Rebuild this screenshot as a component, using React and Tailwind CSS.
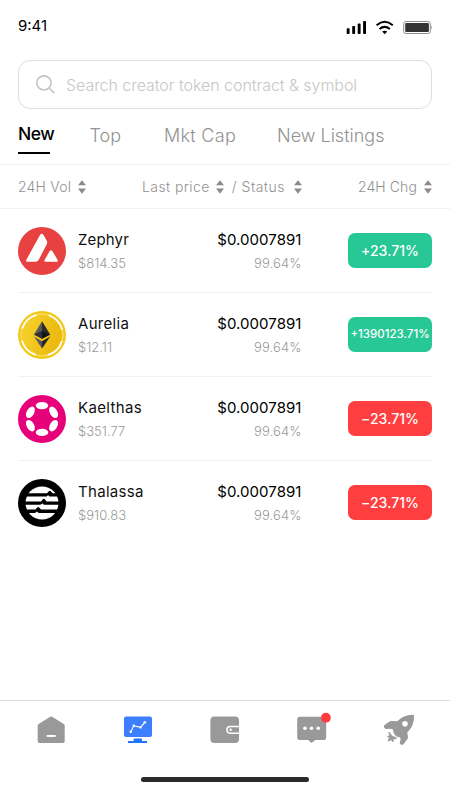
function Zephyr() {
  return (
    <svg className="size-12 shrink-0" viewBox="0 0 48 48">
      <circle cx="24" cy="24" r="24" fill="#e84142" />
      <path fill="#fff" d="M22 8Q23.8 5.4 25.5 8l3.3 5.8q.9 1.7 0 3.4L20.6 33q-.9 1.7-2.9 1.7H9.6q-2.3 0-1.2-2ZM31.6 24.2q1.4-2 2.8 0l5.1 8.5q1.1 2-1 2H27.8q-2.2 0-1.1-2Z" />
    </svg>
  );
}

function Aurelia() {
  return (
    <svg className="size-12 shrink-0" viewBox="0 0 48 48">
      <defs>
        <linearGradient id="gold" x1="0" y1="0" x2="1" y2="0.3">
          <stop offset="0" stopColor="#f7d32f" />
          <stop offset="1" stopColor="#ecb90f" />
        </linearGradient>
      </defs>
      <circle cx="24" cy="24" r="24" fill="#f2c91c" />
      <circle cx="24" cy="24" r="21" fill="none" stroke="#fbeaa8" strokeWidth="0.7" />
      <circle cx="24" cy="24" r="19.6" fill="url(#gold)" />
      <circle cx="24" cy="24" r="20.8" fill="none" stroke="#fff" strokeWidth="1.8" strokeLinecap="round" strokeDasharray="19 13.67" strokeDashoffset="-6.8" />
      <path fill="#5a5a5c" d="M24 10.3 16 23.6l8 4.2Z" />
      <path fill="#2b2b2d" d="m24 10.3 8.2 13.3-8.2 4.2Z" />
      <path fill="#303032" d="m16 23.6 8-3.6v7.8Z" />
      <path fill="#151516" d="m32.2 23.6-8.2-3.6v7.8Z" />
      <path fill="#5a5a5c" d="m16 25.6 8 4.6v7.2Z" />
      <path fill="#252527" d="m32.2 25.6-8.2 4.6v7.2Z" />
    </svg>
  );
}

function Kaelthas() {
  return (
    <svg className="size-12 shrink-0" viewBox="0 0 48 48">
      <circle cx="24" cy="24" r="24" fill="#e6007a" />
      <g fill="#fff">
        <ellipse cx="24" cy="10.6" rx="6.2" ry="3.6" />
        <ellipse cx="24" cy="37.4" rx="6.2" ry="3.6" />
        <ellipse cx="12.4" cy="17.3" rx="6.2" ry="3.7" transform="rotate(-60 12.4 17.3)" />
        <ellipse cx="35.6" cy="17.3" rx="6.2" ry="3.7" transform="rotate(60 35.6 17.3)" />
        <ellipse cx="12.4" cy="30.7" rx="6.2" ry="3.7" transform="rotate(60 12.4 30.7)" />
        <ellipse cx="35.6" cy="30.7" rx="6.2" ry="3.7" transform="rotate(-60 35.6 30.7)" />
      </g>
    </svg>
  );
}

function Thalassa() {
  return (
    <svg className="size-12 shrink-0" viewBox="0 0 48 48">
      <circle cx="24" cy="24" r="24" fill="#000" />
      <circle cx="24" cy="24" r="16.5" fill="#fff" />
      <path fill="#000" d="M6 14.2h23l1.800-1.900q1-.9 2 0l1.800 1.900H42v3.400H32.600q-1.200 0-2-.9l-.6-.6-.7.8q-.7.7-1.700.7H6ZM6 22.400h17l1.800-2.200q1-.9 2 0l1.800 2.200H42v3.400H27q-1.200 0-2-.9l-.6-.6-.7.8q-.7.7-1.700.7H6ZM6 30.600h11.400l1.800-2.200q1-.9 2 0l1.800 2.200H42V34H21.400q-1.200 0-2-.9l-.6-.6-.7.8q-.7.7-1.700.7H6Z" />
    </svg>
  );
}

function Sort() {
  return (
    <svg className="h-[14px] w-2 shrink-0" viewBox="0 0 8 14" fill="#8a8a8a">
      <path d="M4 .2 8 5.3H0ZM4 13.8 0 8.600h8Z" />
    </svg>
  );
}

const tokens = [
  { name: "Zephyr", vol: "$814.35", chg: "+23.71%", up: true, Icon: Zephyr, track: "tracking-[0.15px]" },
  { name: "Aurelia", vol: "$12.11", chg: "+1390123.71%", up: true, small: true, Icon: Aurelia, track: "tracking-[0.3px]" },
  { name: "Kaelthas", vol: "$351.77", chg: "−23.71%", Icon: Kaelthas, track: "tracking-[0.35px]" },
  { name: "Thalassa", vol: "$910.83", chg: "−23.71%", Icon: Thalassa, track: "tracking-[0.3px]" },
];

function TokenRow({ token, last }) {
  const { name, vol, chg, up, small, Icon, track } = token;
  return (
    <li className={`flex h-[84px] items-start pt-[18px] ${last ? "" : "border-b border-[#f2f2f2]"}`}>
      <Icon />
      <div className="ml-3 flex-1 whitespace-nowrap">
        <div className={`mt-[3px] text-[15px] leading-5 text-[#111] ${track}`}>{name}</div>
        <div className="mt-[3px] text-[13px] leading-5 font-[350] text-[#999]">{vol}</div>
      </div>
      <div className="mr-[46.5px] text-right whitespace-nowrap">
        <div className="mt-[3px] text-[15px] leading-5 tracking-[0.05px] text-black">$0.0007891</div>
        <div className="mt-[3px] text-[13px] leading-5 font-[350] tracking-[0.1px] text-[#999]">99.64%</div>
      </div>
      <div
        className={`mt-[6px] flex h-[35px] w-[84px] items-center justify-center rounded-[7px] font-medium whitespace-nowrap text-white ${up ? "bg-[#27c796]" : "bg-[#ff3e40]"} ${small ? "text-[11.5px]" : "text-[14px] tracking-[0.05px]"}`}
      >
        {chg}
      </div>
    </li>
  );
}

function StatusBar() {
  return (
    <header className="flex h-[60px] items-start justify-between px-[18px] pt-4">
      <span className="text-[15px] leading-5 text-black">9:41</span>
      <svg className="mt-[3px] h-4 w-[88px]" viewBox="344 19 88 16">
        <g fill="#000">
          <rect x="346.7" y="28.3" width="2.9" height="5.7" rx="0.8" />
          <rect x="352.2" y="26" width="2.9" height="8" rx="0.8" />
          <rect x="357.7" y="23.6" width="2.9" height="10.4" rx="0.8" />
          <rect x="363.1" y="21" width="2.9" height="13" rx="0.8" />
          <path d="M384.7 34.2 382.2 31.6q2.5-1.8 5 0Z" />
        </g>
        <g fill="none" stroke="#000" strokeWidth="2">
          <path d="M376.6 25.2q8.1-6.9 16.2 0" />
          <path d="M379.5 29q5.2-4.2 10.4 0" />
        </g>
        <rect x="403.7" y="21.5" width="26.6" height="12" rx="2.2" fill="none" stroke="#8c8c8c" strokeWidth="1" />
        <rect x="405.2" y="23" width="23.7" height="9" rx="1" fill="#333" />
        <path d="M431 25.5q1.2 2 0 4Z" fill="#777" />
      </svg>
    </header>
  );
}

function BottomNav() {
  return (
    <nav className="grid h-[76px] grid-cols-5 justify-items-center border-t border-[#dcdcdc] px-2 pt-[13px]">
      <svg className="size-8" viewBox="0 0 32 32">
        <path fill="#999" d="M15.3 2.7q.9-.6 1.8 0L28.8 10q.9.6.9 1.6v15.6q0 1.8-1.8 1.8H4.5q-1.8 0-1.8-1.8V11.6q0-1 .9-1.6Z" />
        <rect x="11.7" y="21" width="9" height="1.9" fill="#fff" />
      </svg>
      <svg className="size-8" viewBox="0 0 32 32">
        <path fill="#3d7eff" d="M4 2.4h24q2 0 2 2V21q0 2-2 2H4q-2 0-2-2V4.4q0-2 2-2Z" />
        <path fill="#1e73ff" d="M11.7 24.4h8.2V27H25v2H6v-2h5.7Z" />
        <path d="m8.8 17.8 3-6 6.7 1.6 4.3-5.1" fill="none" stroke="#fff" strokeWidth="1.1" />
        <g fill="#fff">
          <circle cx="8.8" cy="17.8" r="1.3" />
          <circle cx="11.8" cy="11.8" r="1.2" />
          <circle cx="18.5" cy="13.4" r="1.2" />
          <circle cx="22.8" cy="8.3" r="1.3" />
        </g>
      </svg>
      <svg className="size-8" viewBox="0 0 32 32">
        <rect x="1.4" y="2.4" width="28.6" height="26.6" rx="3.8" fill="#999" />
        <path fill="#fff" d="M30.2 11.7h-9a4.1 4.1 0 0 0 0 8.2h9Z" />
        <path fill="#999" d="M30 13.2h-8.7a2.6 2.6 0 0 0 0 5.2H30Z" />
        <circle cx="21.7" cy="15.8" r="1.2" fill="#fff" />
      </svg>
      <svg className="size-8 overflow-visible" viewBox="0 0 32 32">
        <path fill="#999" d="M4 2.7h23.4q2.8 0 2.8 2.8v17.7q0 2.8-2.8 2.8h-8.1l-3.6 3.1-3.6-3.1H4q-2.8 0-2.8-2.8V5.5q0-2.8 2.8-2.8Z" />
        <g fill="#fff">
          <circle cx="8.9" cy="14.3" r="1.8" />
          <circle cx="15.5" cy="14.3" r="1.8" />
          <circle cx="22.2" cy="14.3" r="1.8" />
        </g>
        <circle cx="29.9" cy="3.7" r="4.9" fill="#ff3b3d" />
      </svg>
      <svg className="size-8" viewBox="0 0 32 32">
        <path
          fill="#999"
          fillRule="evenodd"
          d="M29.8.8Q31 .8 31 2 31.2 8.5 28.2 13.5 26.5 16.4 24.2 18.6 24.7 21 25 23.2 25 24.3 24.3 25.2L20.5 30.3Q19.3 31.3 18 30.5L17 29.9Q16.5 29.3 16.9 28.3 18 25.5 17.3 23.4 13.8 23.3 11.8 20.9 9.8 18.8 10 15.5 7 14.2 3.7 15 2 15.2 1.5 14L1 12.9Q.7 11.7 1.9 10.7L6.5 7.6Q7.7 6.9 9 7L14.3 7.3Q20.3.7 29.8.8ZM22 6.9a2.8 2.8 0 1 0 0 5.6 2.8 2.8 0 0 0 0-5.6Z"
        />
        <path fill="#999" d="M5.2 18.1q1-.4 1.7.5l1.5 2.1 1.1 1.3 3.2.9q1.3.4.9 1.6-.5 1-1.7.7l-1.5-.2.5 1.5q.2 1-.8 1.300-1 .1-1.400-.9l-.4-1-1.300.9-1.200.7q-1 .1-1-1l.7-1.600 1-1.300-1.400-.1q-1-.3-.8-1.200.3-.8 1.500-.8l.8-.1-.9-1.800q-.4-.9-.5-1.100Z" />
      </svg>
    </nav>
  );
}

export default function App() {
  return (
    <div className="flex h-[800px] w-[450px] flex-col overflow-hidden bg-white font-['Inter','Liberation_Sans',sans-serif]">
      <StatusBar />
      <div className="mx-[18px] flex h-[49px] shrink-0 items-center rounded-[12px] border border-[#dedede] pl-[17px]">
        <svg className="size-[19px]" viewBox="0 0 19 19" fill="none" stroke="#c6c6c6" strokeWidth="1.7" strokeLinecap="round">
          <circle cx="7.9" cy="7.9" r="7.1" />
          <path d="m13 13 4.8 4.6" />
        </svg>
        <span className="ml-[11px] text-[16px] leading-6 font-[350] tracking-[-0.05px] whitespace-nowrap text-[#c6c6c6]">Search creator token contract &amp; symbol</span>
      </div>
      <div className="flex h-[56px] shrink-0 items-start border-b border-[#f2f2f2] px-[17px] pt-[14px] text-[18px] leading-[26px] font-[350] whitespace-nowrap text-[#929292]">
        <div className="mt-[-2px] w-[72.5px] pl-px text-[17.5px] font-medium tracking-[-0.5px] text-black">
          New
          <div className="mt-[5px] h-[2px] w-8 bg-black" />
        </div>
        <div className="w-[74.5px]">Top</div>
        <div className="w-[113px] tracking-[0.3px]">Mkt Cap</div>
        <div>New Listings</div>
      </div>
      <div className="flex h-11 shrink-0 items-center border-b border-[#f2f2f2] px-[18px] text-[14px] leading-5 font-[350] tracking-[0.3px] whitespace-nowrap text-[#929292]">
        <div className="flex w-[124px] items-center gap-[7px]">
          <span className="tracking-[0.2px]">24H Vol</span>
          <Sort />
        </div>
        <div className="flex w-[159.5px] items-center">
          <span className="tracking-[0.4px]">Last price</span>
          <span className="ml-[6px] flex">
            <Sort />
          </span>
          <span className="ml-2 flex-1 tracking-[0.5px]">/ Status</span>
          <Sort />
        </div>
        <div className="ml-auto flex items-center gap-[7px]">
          <span className="tracking-[0.1px]">24H Chg</span>
          <Sort />
        </div>
      </div>
      <ul className="flex-1 px-[18px]">
        {tokens.map((token, i) => (
          <TokenRow key={token.name} token={token} last={i === tokens.length - 1} />
        ))}
      </ul>
      <BottomNav />
      <div className="h-6 shrink-0 pt-[0.5px]">
        <div className="mx-auto h-[5.5px] w-[168px] rounded-full bg-[#2a2a2a]" />
      </div>
    </div>
  );
}
